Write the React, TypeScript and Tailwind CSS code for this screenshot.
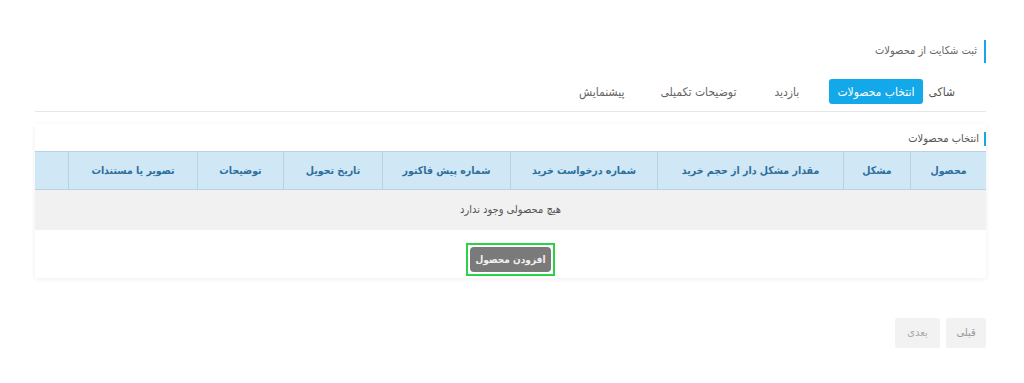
import React from "react";

const cols: { label: string; w: string }[] = [
  { label: "محصول", w: "w-[76px]" },
  { label: "مشکل", w: "w-[67px]" },
  { label: "مقدار مشکل دار از حجم خرید", w: "w-[186px]" },
  { label: "شماره درخواست خرید", w: "w-[147px]" },
  { label: "شماره پیش فاکتور", w: "w-[128px]" },
  { label: "تاریخ تحویل", w: "w-[99px]" },
  { label: "توضیحات", w: "w-[86px]" },
  { label: "تصویر یا مستندات", w: "w-[129px]" },
  { label: "", w: "flex-1" },
];

export default function App() {
  return (
    <div
      dir="rtl"
      className="w-[1024px] h-[383px] bg-white pr-[38px] pl-[35px] pt-[40px] text-[12px] text-[#555]"
      style={{ fontFamily: '"DejaVu Sans Condensed", "DejaVu Sans", sans-serif' }}
    >
      <div className="h-[23px] flex items-center border-r-[2px] border-[#1ba5e6] pr-[7px] text-[11px] text-[#666]">
        ثبت شکایت از محصولات
      </div>

      <div className="mt-[16px] flex items-center pr-[31px] pb-[7px] border-b border-[#e6e6e6]">
        <div className="h-[25px] flex items-center text-[12px] text-[#555] ml-[6px]">شاکی</div>
        <div className="h-[25px] flex items-center px-[8px] rounded-[3px] bg-[#13a8ea] text-white text-[12px] ml-[30px]">
          انتخاب محصولات
        </div>
        <div className="h-[25px] flex items-center text-[#666] text-[12px] ml-[38px]">بازدید</div>
        <div className="h-[25px] flex items-center text-[#666] text-[12px] ml-[36px]">توضیحات تکمیلی</div>
        <div className="h-[25px] flex items-center text-[#666] text-[12px]">پیشنمایش</div>
      </div>

      <div className="mt-[12px] bg-white shadow-[0_1px_5px_rgba(0,0,0,0.07)] pt-[8px]">
        <div className="h-[14px] flex items-center border-r-[2px] border-[#1ba5e6] pr-[5px] text-[11px] text-[#555]">
          انتخاب محصولات
        </div>
        <div className="mt-[5px] flex h-[39px] bg-[#d0e7f5] border-t border-b border-[#b8d2e2]">
          {cols.map((c, i) => (
            <div
              key={i}
              className={`${c.w} flex items-center justify-center text-[10.5px] font-bold text-[#2f6f9c] ${
                i < cols.length - 1 ? "border-l border-[#b8d2e2]" : ""
              }`}
            >
              {c.label}
            </div>
          ))}
        </div>
        <div className="h-[40px] bg-[#f1f1f1] flex items-center justify-center text-[11px] text-[#555]">
          هیچ محصولی وجود ندارد
        </div>
        <div className="h-[48px] flex justify-center pt-[13px]">
          <div className="h-[33px] border-2 border-[#2bd246] p-[2px]">
            <div className="h-[25px] px-[6px] rounded-[4px] bg-[#7a7a7a] text-[#f0f0f0] text-[10px] font-bold flex items-center">
              افزودن محصول
            </div>
          </div>
        </div>
      </div>

      <div className="mt-[40px] flex gap-[6px]">
        <div className="w-[40px] h-[30px] rounded-[2px] bg-[#f2f2f2] text-[#999] text-[11px] flex items-center justify-center">
          قبلی
        </div>
        <div className="w-[45px] h-[30px] rounded-[2px] bg-[#f2f2f2] text-[#aaa] text-[11px] flex items-center justify-center">
          بعدی
        </div>
      </div>
    </div>
  );
}
